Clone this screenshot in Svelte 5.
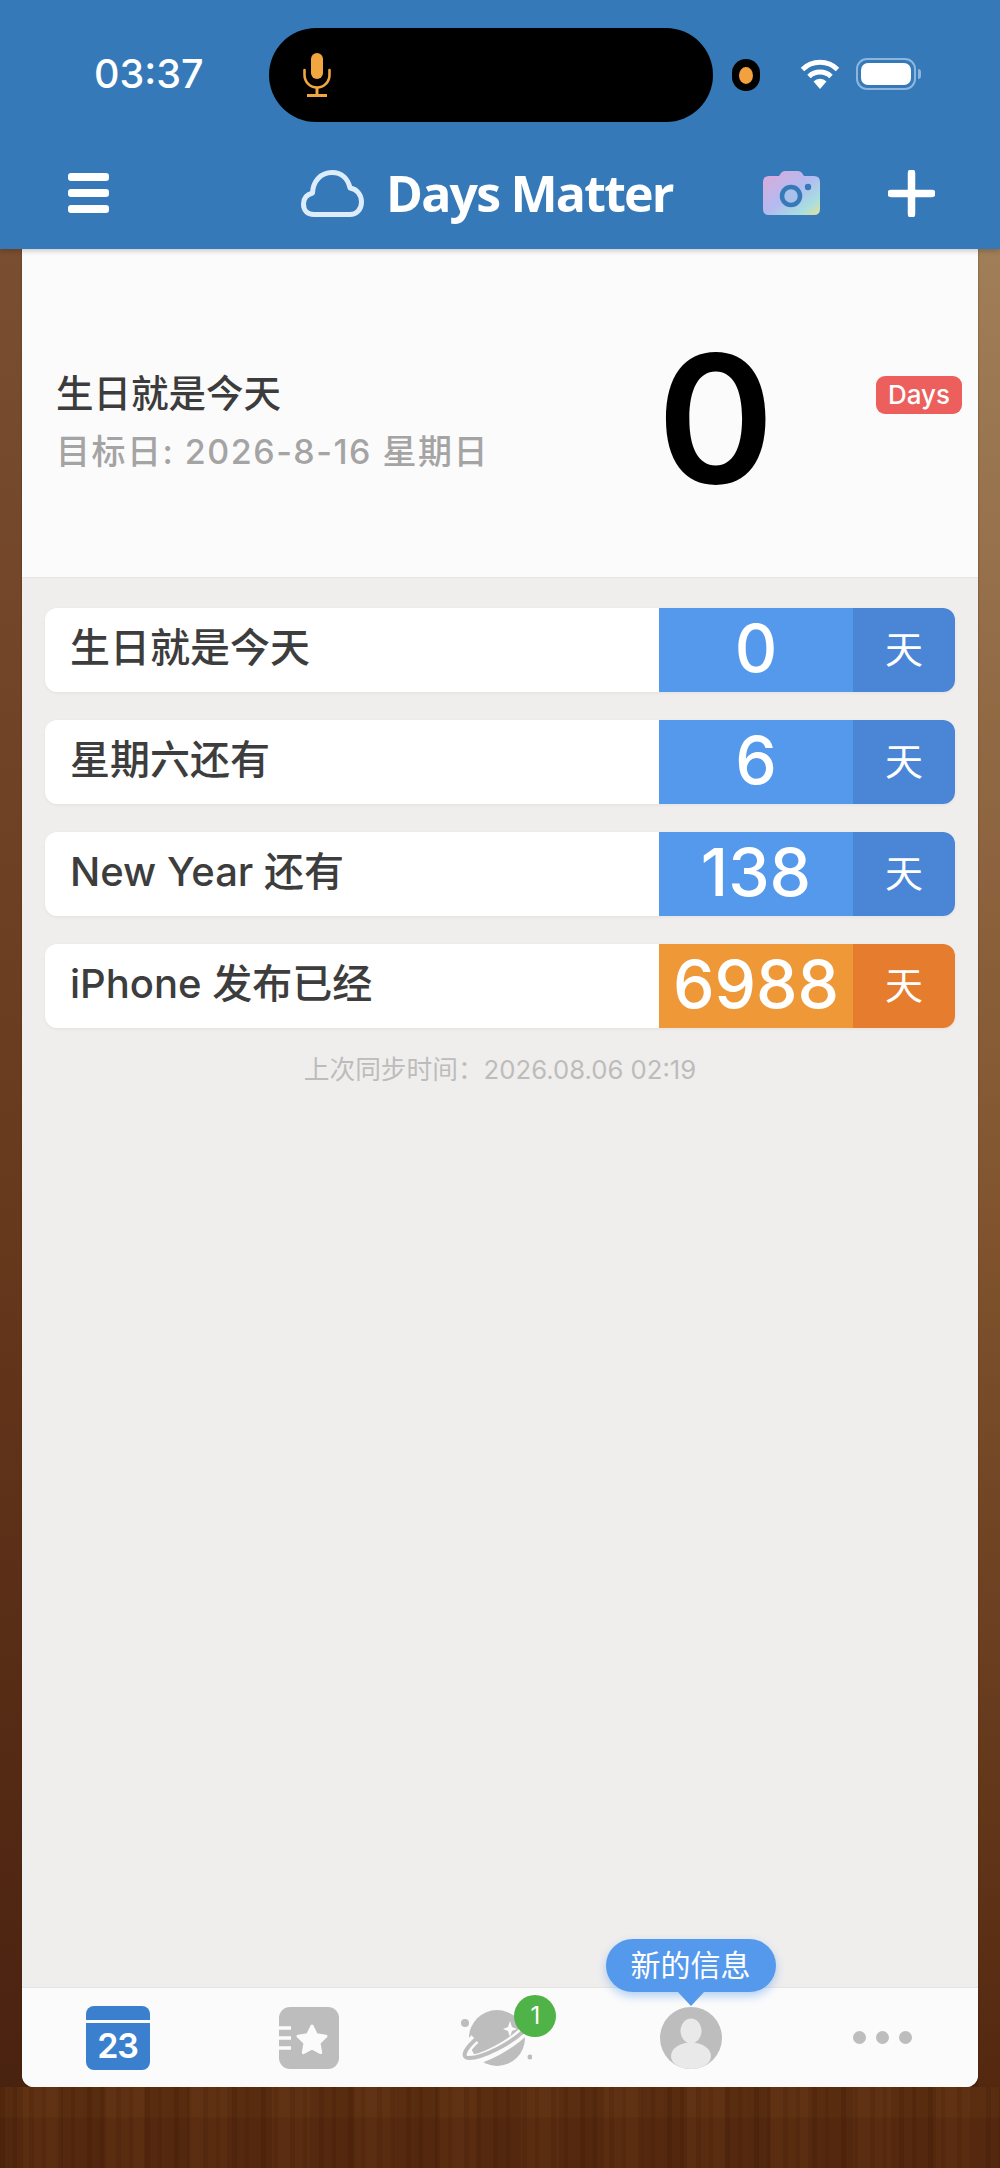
<script>
  const rows = [
    { title: '生日就是今天', days: '0', tone: 'blue' },
    { title: '星期六还有', days: '6', tone: 'blue' },
    { title: 'New Year 还有', days: '138', tone: 'blue' },
    { title: 'iPhone 发布已经', days: '6988', tone: 'orange' }
  ];
</script>

<div class="page">
  <header class="head">
    <div class="status">
      <span class="time">03:37</span>
      <div class="island">
        <svg class="mic" viewBox="0 0 30 44" width="30" height="44">
          <rect x="9" y="0" width="12" height="26" rx="6" fill="#f2a63f" />
          <path d="M2.5 17v5a12.5 12.5 0 0 0 25 0v-5" fill="none" stroke="#f2a63f" stroke-width="2.6" stroke-linecap="round" />
          <path d="M15 34.5V42M5 42.5h20" fill="none" stroke="#f2a63f" stroke-width="3" />
        </svg>
      </div>
      <div class="privacy"><span class="privacy-dot"></span></div>
      <svg class="wifi" viewBox="0 0 40 30" width="40" height="30">
        <path d="M2.5 10.5a25 25 0 0 1 35 0" fill="none" stroke="#fff" stroke-width="5" />
        <path d="M9 17.5a16 16 0 0 1 22 0" fill="none" stroke="#fff" stroke-width="5" />
        <path d="M20 30l-6.5-7.5a9 9 0 0 1 13 0z" fill="#fff" />
      </svg>
      <div class="battery"><span class="battery-fill"></span></div>
      <span class="battery-cap"></span>
    </div>
    <div class="nav">
      <div class="burger"><span></span><span></span><span></span></div>
      <svg class="cloud" viewBox="0 0 63 47" width="63" height="47">
        <path d="M13 44.500C6 44.500 2.500 40 2.500 34C2.500 28 6 24.500 11.500 23C12 11 20 2.500 31 2.500C41 2.500 47 9 49 18C56 19 60.500 25 60.500 32C60.500 40 55 44.500 49 44.500Z" fill="none" stroke="#dcecfb" stroke-width="5" stroke-linejoin="round" />
      </svg>
      <h1 class="brand">Days Matter</h1>
      <svg class="camera" viewBox="0 0 57 44" width="57" height="44">
        <defs>
          <linearGradient id="cam" x1="0" y1="0" x2="1" y2="1">
            <stop offset="0" stop-color="#dcaad8" />
            <stop offset="0.5" stop-color="#b4baf0" />
            <stop offset="0.8" stop-color="#a8dfe0" />
            <stop offset="1" stop-color="#e6df9c" />
          </linearGradient>
        </defs>
        <path d="M6 5h10l2-3q1.500-2 4-2h13q2.500 0 4 2l2 3h10q6 0 6 6v27q0 6-6 6H6q-6 0-6-6V11q0-6 6-6z" fill="url(#cam)" />
        <circle cx="28" cy="25" r="9" fill="#a9c0ea" stroke="#3579b8" stroke-width="4.500" />
        <circle cx="45" cy="16" r="3.200" fill="#3579b8" />
      </svg>
      <svg class="plus" viewBox="0 0 47 47" width="47" height="47">
        <path d="M23.500 3v41M3 23.500h41" stroke="#fff" stroke-width="7.500" stroke-linecap="round" />
      </svg>
    </div>
  </header>

  <main class="card">
    <section class="hero">
      <div class="hero-text">
        <div class="hero-title">生日就是今天</div>
        <div class="hero-sub">目标日: 2026-8-16 星期日</div>
      </div>
      <div class="hero-num">0</div>
      <div class="hero-badge">Days</div>
    </section>

    <section class="list">
      {#each rows as row}
        <div class="row {row.tone}">
          <div class="row-title">{row.title}</div>
          <div class="row-num">{row.days}</div>
          <div class="row-unit">天</div>
        </div>
      {/each}
      <div class="sync">上次同步时间：2026.08.06 02:19</div>
    </section>

    <nav class="tabs">
      <div class="tab">
        <div class="cal"><span class="cal-top"></span><span class="cal-num">23</span></div>
      </div>
      <div class="tab">
        <svg viewBox="0 0 60 62" width="60" height="62">
          <rect x="0" y="0" width="60" height="62" rx="11" fill="#bdbdbd" />
          <path d="M0 21h12M0 31h12M0 41h12" stroke="#fbfbfb" stroke-width="3.500" />
          <path d="M33 19l4.400 8.800 9.600 1.400-7 6.800 1.700 9.600-8.700-4.600-8.700 4.600 1.700-9.600-7-6.800 9.600-1.400z" fill="#fbfbfb" stroke="#fbfbfb" stroke-width="3" stroke-linejoin="round" />
        </svg>
      </div>
      <div class="tab planet-tab">
        <svg class="planet" viewBox="0 0 72 58" width="72" height="58">
          <circle cx="37" cy="29" r="28" fill="#bdbdbd" />
          <path d="M15 30C3 41 1 51 9 51C22 51 52 36 68 18" fill="none" stroke="#fbfbfb" stroke-width="10" />
          <path d="M15 31C3 42 2 49 9 49C22 49 52 35 69 17" fill="none" stroke="#bdbdbd" stroke-width="4" stroke-linecap="round" />
          <circle cx="5" cy="14" r="4" fill="#bdbdbd" />
          <circle cx="70" cy="48" r="2.500" fill="#bdbdbd" />
          <path d="M50 12l2 6 5 2-5 2-2 6-2-6-5-2 5-2z" fill="#fbfbfb" />
        </svg>
        <span class="count">1</span>
      </div>
      <div class="tab avatar-tab">
        <svg viewBox="0 0 62 62" width="62" height="62">
          <defs><clipPath id="av"><circle cx="31" cy="31" r="31" /></clipPath></defs>
          <circle cx="31" cy="31" r="31" fill="#bdbdbd" />
          <g clip-path="url(#av)" fill="#e9e9e9">
            <ellipse cx="31" cy="24" rx="10.500" ry="12.500" />
            <ellipse cx="31" cy="49" rx="20" ry="13.500" />
          </g>
        </svg>
        <div class="tip">新的信息</div>
      </div>
      <div class="tab dots"><span></span><span></span><span></span></div>
    </nav>
  </main>
  <div class="wood-foot"></div>
</div>

<style>
  :global(body) {
    margin: 0;
  }

  .page {
    width: 1000px;
    height: 2168px;
    display: flex;
    flex-direction: column;
    overflow: hidden;
    font-family: Inter, "Noto Sans CJK SC", sans-serif;
    background:
      linear-gradient(180deg, #a07e58 249px, #80532e 1240px, #53280f 2087px) right top / 22px 100% no-repeat,
      linear-gradient(180deg, #7a4e30 249px, #66381c 1240px, #4a2210 2087px);
  }

  .head {
    height: 249px;
    flex: none;
    background: #3579b8;
    color: #fff;
    position: relative;
    z-index: 2;
    box-shadow: 0 2px 5px rgba(0, 0, 0, 0.2);
  }

  .status {
    height: 148px;
    box-sizing: border-box;
    padding: 28px 0 0 94px;
    display: flex;
    align-items: flex-start;
  }

  .time {
    width: 175px;
    font-size: 39.500px;
    line-height: 92px;
    font-weight: 500;
  }

  .island {
    width: 444px;
    height: 94px;
    border-radius: 47px;
    background: #000;
    display: flex;
    align-items: center;
    padding-left: 33px;
    box-sizing: border-box;
  }

  .privacy {
    width: 28px;
    height: 32px;
    margin: 31px 40px 0 19px;
    border-radius: 16px;
    background: #000;
    display: flex;
    align-items: center;
    justify-content: center;
  }

  .privacy-dot {
    width: 14px;
    height: 17px;
    border-radius: 50%;
    background: #f2a040;
  }

  .wifi {
    margin-top: 31px;
  }

  .battery {
    width: 60px;
    height: 32px;
    margin: 30px 0 0 16px;
    box-sizing: border-box;
    border: 2px solid #8db6de;
    border-radius: 11px;
    padding: 3px;
    display: flex;
  }

  .battery-fill {
    flex: 1;
    background: #fff;
    border-radius: 7px;
  }

  .battery-cap {
    width: 3px;
    height: 10px;
    margin: 41px 0 0 2px;
    background: #8db6de;
    border-radius: 0 3px 3px 0;
  }

  .nav {
    height: 101px;
    display: flex;
    align-items: center;
    padding-left: 68px;
    padding-bottom: 11px;
    box-sizing: border-box;
  }

  .burger {
    width: 41px;
    display: flex;
    flex-direction: column;
    gap: 8px;
    margin-right: 192px;
  }

  .burger span {
    height: 8px;
    border-radius: 3px;
    background: #fff;
  }

  .brand {
    margin: 0 91px 0 22px;
    font-family: "Open Sans", sans-serif;
    font-size: 50px;
    font-weight: 700;
    line-height: 60px;
    letter-spacing: -1.800px;
    width: 286px;
    white-space: nowrap;
  }

  .plus {
    margin-left: 68px;
  }

  .card {
    width: 956px;
    height: 1838px;
    flex: none;
    margin: 0 22px;
    display: flex;
    flex-direction: column;
    border-radius: 0 0 12px 12px;
    overflow: hidden;
    background: #f0eeed;
    box-shadow: 0 0 2px rgba(60, 40, 20, 0.55);
  }

  .hero {
    height: 328px;
    flex: none;
    background: #fbfbfb;
    position: relative;
    display: flex;
    align-items: center;
    box-sizing: border-box;
    padding-left: 34px;
    box-shadow: 0 1px 1px rgba(0, 0, 0, 0.03);
  }

  .hero-text {
    width: 581px;
    margin-top: 20px;
  }

  .hero-title {
    font-size: 37.500px;
    line-height: 56px;
    font-weight: 500;
    color: #3c3c3c;
  }

  .hero-sub {
    margin-top: 2px;
    font-size: 34px;
    line-height: 56px;
    font-weight: 500;
    letter-spacing: 1.500px;
    color: #a4a4a4;
  }

  .hero-num {
    font-size: 178px;
    line-height: 200px;
    font-weight: 600;
    color: #000;
    margin-left: 20px;
    margin-top: 12px;
  }

  .hero-badge {
    position: absolute;
    left: 854px;
    top: 127px;
    width: 86px;
    height: 38px;
    border-radius: 9px;
    background: #ec5f5c;
    color: #fff;
    font-size: 26px;
    font-weight: 500;
    line-height: 38px;
    text-align: center;
  }

  .list {
    flex: 1;
    padding: 31px 23px 0;
    display: flex;
    flex-direction: column;
    gap: 28px;
    background: #f0eeed;
  }

  .row {
    height: 84px;
    display: flex;
    align-items: center;
    border-radius: 12px;
    overflow: hidden;
    background: #fff;
    box-shadow: 0 1px 3px rgba(0, 0, 0, 0.06);
  }

  .row-title {
    flex: 1;
    padding-left: 25px;
    padding-bottom: 10px;
    font-size: 40px;
    font-weight: 500;
    color: #3d3d3d;
    white-space: nowrap;
  }

  .row-num {
    width: 194px;
    height: 100%;
    text-align: center;
    color: #fff;
    font-size: 66px;
    line-height: 80px;
    font-weight: 500;
  }

  .row-unit {
    width: 102px;
    height: 100%;
    text-align: center;
    color: #fff;
    font-size: 38px;
    line-height: 82px;
  }

  .blue .row-num {
    background: #5599ec;
  }

  .blue .row-unit {
    background: #4a85d6;
  }

  .orange .row-num {
    background: #ee9838;
  }

  .orange .row-unit {
    background: #e57c2e;
  }

  .sync {
    margin-top: -4px;
    text-align: center;
    font-size: 25.700px;
    line-height: 36px;
    color: #bcbcbc;
  }

  .tabs {
    height: 99px;
    flex: none;
    background: #fbfbfb;
    display: flex;
    box-shadow: 0 -1px 1px rgba(0, 0, 0, 0.04);
    position: relative;
  }

  .tab {
    flex: 1;
    display: flex;
    align-items: center;
    justify-content: center;
    position: relative;
  }

  .cal {
    width: 64px;
    height: 64px;
    border-radius: 8px;
    background: #3a80cf;
    position: relative;
    text-align: center;
    overflow: hidden;
  }

  .cal-top {
    display: block;
    height: 14px;
    border-bottom: 3px solid #fbfbfb;
  }

  .cal-num {
    display: block;
    color: #fff;
    font-size: 34px;
    line-height: 46px;
    font-weight: 600;
    letter-spacing: -1px;
  }

  .planet {
    margin-left: -8px;
  }

  .count {
    position: absolute;
    left: 110px;
    top: 7px;
    width: 42px;
    height: 42px;
    border-radius: 50%;
    background: #4fb347;
    color: #fff;
    font-size: 24px;
    line-height: 42px;
    text-align: center;
  }

  .tip {
    position: absolute;
    left: 10px;
    top: -49px;
    width: 170px;
    height: 53px;
    border-radius: 27px;
    background: #5599ec;
    color: #fff;
    font-size: 30px;
    line-height: 52px;
    text-align: center;
    box-shadow: 0 4px 10px rgba(85, 153, 236, 0.45);
  }

  .tip::after {
    content: "";
    position: absolute;
    left: 71px;
    top: 52px;
    border-left: 14px solid transparent;
    border-right: 14px solid transparent;
    border-top: 15px solid #5599ec;
  }

  .dots {
    gap: 10px;
  }

  .dots span {
    width: 13px;
    height: 13px;
    border-radius: 50%;
    background: #bdbdbd;
  }

  .wood-foot {
    flex: 1;
    background:
      linear-gradient(180deg, rgba(0, 0, 0, 0) 30px, rgba(40, 0, 0, 0.1) 31px),
      repeating-linear-gradient(90deg, rgba(30, 10, 0, 0.05) 0 5px, rgba(255, 190, 120, 0.02) 5px 13px, rgba(30, 10, 0, 0.03) 13px 17px, rgba(255, 190, 120, 0.025) 17px 29px),
      repeating-linear-gradient(90deg, rgba(30, 10, 0, 0.07) 0 23px, rgba(255, 190, 120, 0.025) 23px 61px, rgba(30, 10, 0, 0.03) 61px 83px),
      #582b0e;
  }
</style>
